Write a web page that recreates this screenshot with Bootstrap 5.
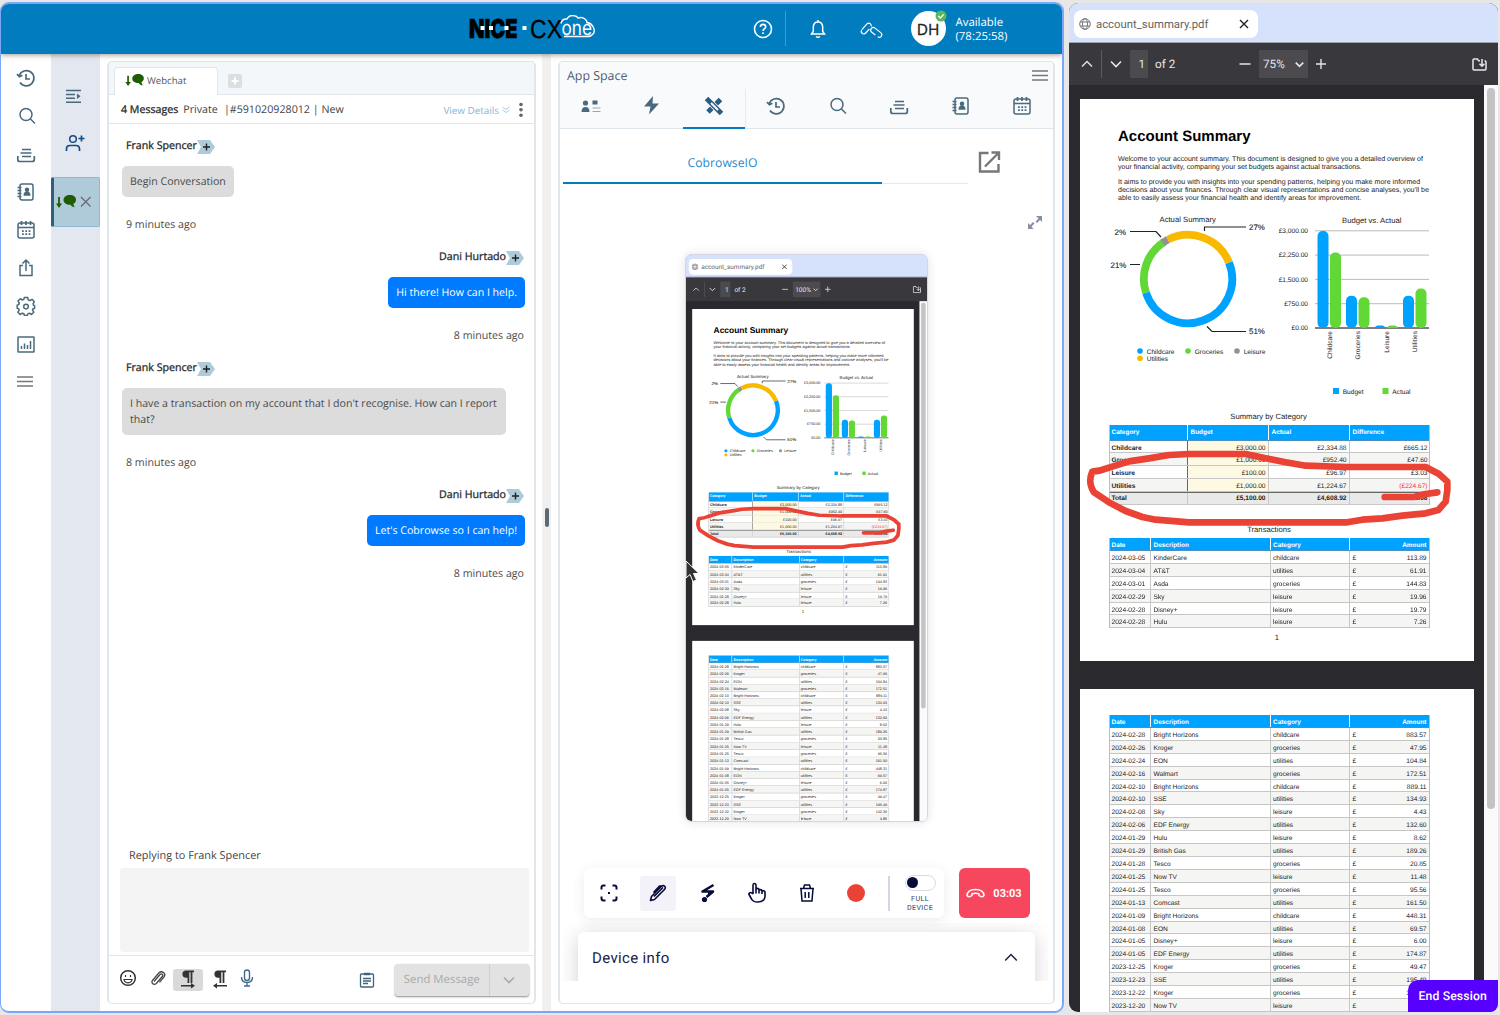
<!DOCTYPE html>
<html lang="en">
<head>
<meta charset="utf-8">
<title>Agent workspace</title>
<link href="https://cdn.jsdelivr.net/npm/bootstrap@5.3.0/dist/css/bootstrap.min.css" rel="stylesheet">
<style>
html,body{height:100%}
body{background:#e7e7e8;font-family:"Open Sans","Noto Sans",sans-serif;font-size:10.7px;line-height:16px;color:#444;overflow:hidden;text-rendering:geometricPrecision}
svg{display:block;flex:none}
.ico{width:20px;height:20px;color:#4a697d;fill:none;stroke:currentColor;stroke-width:1.5}
.desk{width:1500px;height:1015px;padding:2px 2px 3px 0}
.agent{width:1064px;height:1011px;border:2px solid #7ba6fa;border-left-width:1px;border-radius:9px;overflow:hidden;background:#fff}
.topbar{height:50px;background:#007cbf;display:grid;grid-template-columns:1fr auto 1fr;align-items:center;color:#fff;box-shadow:0 1px 5px rgba(80,50,30,.5);position:relative;z-index:2;flex:none}
.topright{padding-left:157px;padding-bottom:1px}
.hdiv{width:1px;height:35px;background:#3f9bd0}
.avatar{width:35px;height:35px;border-radius:50%;background:#fff;color:#222;font-size:15.5px;font-weight:500;-webkit-text-stroke:.35px #222;position:relative}
.avatar svg{position:absolute;right:-1px;top:-1px}
.rail{width:50px;padding:14px 0 0 0;gap:18px;flex:none}
.rail2{width:49px;background:#e3e7ef;flex:none}
.tile{width:49px;height:50px;background:#afcbda;border:1px solid #8fb9cf;border-left:3px solid #2b6081;border-radius:2px}
.panel{border:1px solid #dfe7ed;border-width:1px 2px 1.5px;border-radius:5px;background:#fff;overflow:hidden}
.chatpanel{width:429px;margin:7px 0 7px 7px;flex:none}
.tabstrip{height:33px;background:#f3f7fa;border-bottom:1px solid #dfe7ed;padding-left:5px;flex:none}
.chattab{width:104px;height:28px;margin-top:5px;background:#fff;border:1px solid #dfe7ed;border-bottom:0;border-radius:4px 4px 0 0;padding:0 0 2px 10px;font-size:9.6px;color:#555}
.addtab{width:14px;height:14px;background:#dcdfe0;border-radius:2px;margin:12px 0 0 10px}
.convhead{height:29px;border-bottom:1px solid #dfe7ed;padding:2px 10px 0 12px;white-space:pre;flex:none}
.thread{padding:13px 9px 0 13px;flex:1}
.who{height:16px;line-height:18px;font-weight:500;color:#222;padding:0 1px 0 4px;font-size:10.65px;-webkit-text-stroke:.3px #333}
.tag{width:18px;height:14px;margin-top:3px}
.bub{margin-top:13px;padding:8px 8px 7px;border-radius:5px;background:#dcdcdc;font-size:10.6px;color:#4a4a4a;white-space:nowrap}
.bub.long{width:384px}
.bub.out{background:#007bff;color:#fff}
.ago{height:16px;line-height:18px;margin:19px 1px 16px 4px;color:#4a4a4a;font-size:10.65px}
.compose{height:84px;margin:4px 5px 3px 11px;background:#f4f4f4;border-radius:3px}
.ctools{height:48px;border-top:1px solid #dfe7ed;padding:0 5px 0 9px;flex:none}
.rtl{width:30px;height:22px;background:#d9d9d9;border-radius:3px}
.send{width:134px;height:32px;background:#e2e2e2;color:#a9a9a9;border-radius:3px;box-shadow:0 1px 2px rgba(0,0,0,.45);font-size:11.4px}
.split{width:9px;background:#f0f0f0;margin:0 7px 0 6px;flex:none}
.grip{width:4px;height:19px;border-radius:2px;background:#5b6b76}
.appspace{width:497px;margin:7px 0 7px 0;flex:none}
.apphead{height:67px;background:#f9fafc;border-bottom:1px solid #dfe7ed;flex:none}
.apptabs>span{width:62px;height:40px;padding-bottom:6px;display:flex;align-items:center;justify-content:center}
.apptabs>span.on{border-bottom:2px solid #007cbf;padding-bottom:4px;box-shadow:1px 0 0 #e6ebf0}
.cotab{width:319px;height:54px;border-bottom:2.5px solid #007cbf;color:#2b8ac9;font-size:12.2px}
.shot{width:243px;height:568px;margin:0 auto;border-radius:6px;border:1px solid #d3d6e6;overflow:hidden;box-shadow:0 0 10px rgba(60,60,100,.14)}
.shot .scaler{transform:scale(.5625);transform-origin:0 0;width:430px;height:1010px}
.cotools{width:360px;height:50px;background:#fff;border-radius:7px;box-shadow:0 3px 14px rgba(40,40,70,.09);color:#060b3a}
.cotools .ci{width:49.5px;display:flex;justify-content:center}
.act{width:36px;height:35px;background:#f4f2f9;border-radius:3px}
.endcall{width:71px;height:50px;background:#f7475f;border-radius:6px;color:#fff;font:bold 11px Roboto,sans-serif;gap:8px}
.full{font:400 7.2px/9px Roboto,sans-serif;color:#3b3f63;text-align:center;letter-spacing:.35px}
.tog{width:31px;height:16px;border:1px solid #d9dae3;border-radius:8px;padding:1.5px}
.tog i{display:block;width:11px;height:11px;border-radius:50%;background:#060b3a}
.infoclip{height:58px;overflow:hidden;padding:9px 14px 0 15px;margin:5px 4px 0 3px}
.info{height:70px;background:#fff;border-radius:6px;box-shadow:0 4px 20px rgba(30,30,60,.2);color:#1d2145;font:15px Roboto,"Noto Sans",sans-serif;letter-spacing:.35px;padding:0 17px 19px 14px}
/* pdf browser window */
.pdfwin{width:429px;height:1009px;border-radius:9px;overflow:hidden;background:#2a2a2e;font-family:Roboto,sans-serif;text-align:left}
.pdfwin .tabs{height:39px;background:#d6e1fb;padding:7px 0 0 5px;flex:none}
.pdftab{width:184px;height:28px;background:#fff;border-radius:8px;padding:0 9px 0 5px;color:#666;font-size:11.35px}
.ptools{height:43px;background:#38383d;color:#e6e6e8;font-size:11.7px;border-top:1px solid #9fa3ad;flex:none}
.ptools .fld{height:28px;background:#4a4a4f}
.stage{padding:14px 0 0 11px}
.track{width:14px;background:#fafafa;padding:3px 0 0 3px}
.thumbbar{width:8px;height:721px;border-radius:4px;background:#c4c4c4}
.sheet{width:394px;height:562px;background:#fff;color:#111;font-family:"Liberation Sans",Arial,sans-serif;position:relative;margin-bottom:28px;flex:none}
.sheet h1{font-size:15px;line-height:18px;font-weight:700;margin:0;padding:29px 0 0 38px;color:#000}
.sheet p{font-size:7.08px;line-height:8px;margin:0 0 7px 38px;white-space:nowrap;color:#222}
.cap7{font-size:7.7px;line-height:11.5px;height:10px;text-align:center;color:#222}
.gt{border:1px solid #bdbdbd;border-width:0 .8px;width:321.5px;margin-left:28.5px;font-size:6.6px;line-height:15px;color:#222}
.gr{height:12.92px;display:flex;border-bottom:1px solid #c6c6c6}
.gr:nth-child(odd){background:#f5f5f3}
.gr>*{border-left:1px solid #c8c8c8;padding:0 2.5px 0 2.5px;overflow:hidden;white-space:nowrap;flex:none}
.gr>*:first-child{border-left:0;padding-left:2px}
.gr.h{background:#00a2ff;color:#fff;font-weight:700;font-size:6.45px;border-bottom-color:#4a90c0}
.gr.h>*{border-left-color:#fff}
.tx>.gr>:nth-child(1){width:40.5px}.tx>.gr>:nth-child(2){width:119.5px}.tx>.gr>:nth-child(3){width:79.5px}
.tx>.gr>:nth-child(4){width:80px;display:flex;justify-content:space-between}
.sm>.gr>*{width:81px;text-align:right}.sm>.gr>:first-child{width:77.5px;text-align:left;font-weight:700}
.sm>.gr:not(.h):not(.t)>:nth-child(2){background:#fef9e2;border-left-color:#666}
.sm>.gr.h{height:15.5px;line-height:16.5px}.sm>.gr.h>*{text-align:left}
.sm>.gr.t{background:#e9e9e9;font-weight:700;border-top:1px solid #666;line-height:12.5px}
.neg{color:#ff2d35}
.ink{position:absolute;left:0;top:0}
.endses{position:absolute;right:0;bottom:0;width:90.5px;height:32px;background:#5800ff;color:#fff;border-radius:10px 0 8px 0;font:500 12.2px/32px Roboto,sans-serif;text-align:center;letter-spacing:.15px}
.cursor{position:absolute;left:0;top:307px}
</style>
</head>
<body>
<svg width="0" height="0" class="position-absolute" aria-hidden="true">
<symbol id="i-hist" viewBox="0 0 20 20"><path d="M3.2 7.500A7.600 7.600 0 1 1 4 14.500M1 6.200l2.400 2.600 3-1.600M10 6v5h4" stroke-width="1.700"/></symbol>
<symbol id="i-search" viewBox="0 0 20 20"><circle cx="10" cy="8.500" r="6"/><path d="M14.500 13l4.500 4.500" /></symbol>
<symbol id="i-inbox" viewBox="0 0 20 20"><path d="M6 5.500h9M4.500 9h11M6 12.500h9M1.800 12v3.500q0 2 2 2h12.500q2 0 2-2V12" stroke-width="1.700"/></symbol>
<symbol id="i-book" viewBox="0 0 20 20"><rect x="4" y="2" width="13" height="16" rx="2"/><path d="M1.500 5.500h4M1.500 8.500h4M1.500 11.500h4M1.500 14.500h4"/><circle cx="11" cy="7.800" r="1.500" fill="currentColor"/><path d="M8.300 13q0-2.800 2.700-2.800t2.700 2.800z" fill="currentColor"/></symbol>
<symbol id="i-cal" viewBox="0 0 20 20"><rect x="2" y="3" width="16" height="15" rx="2"/><path d="M2 7.500h16M5.500 1v4M10 1v4M14.500 1v4" stroke-width="1.700"/><path d="M6 11.200h9M6 14.200h9" stroke-dasharray="1.800 1.500" stroke-width="1.800"/></symbol>
<symbol id="i-share" viewBox="0 0 20 20"><path d="M7 7.500H4v10h12v-10h-3M10 13V2.500M6.500 5.500L10 2l3.500 3.500"/></symbol>
<symbol id="i-gear" viewBox="0 0 20 20"><path d="M8.300 1.500h3.400l.5 2.300 1.700.8 2.100-1.300 2.300 2.400-1.300 2.100.6 1.500 1 .3v2.800l-1.600.4-.5 1.300 1.300 2.100-2.300 2.300-2.100-1.300-1.600.7-.5 1.600H8.400l-.5-1.700-1.600-.6-2.200 1.300-2.200-2.300 1.300-2-.6-1.600-1.400-.4V9l1.500-.4.6-1.500L2 5l2.300-2.300 2 1.300 1.500-.6z" stroke-linejoin="round"/><circle cx="10" cy="10.600" r="2.300"/></symbol>
<symbol id="i-chart" viewBox="0 0 20 20"><rect x="2" y="3" width="16" height="15" rx=".5"/><path d="M5.500 15v-3M8.500 15V9.500M11.500 15v-4M14.500 15V7"/></symbol>
<symbol id="i-menu" viewBox="0 0 20 20"><path d="M1 5h16M1 9.500h16M1 14h16" stroke="#777" stroke-width="1.500"/></symbol>
<symbol id="i-chat" viewBox="0 0 22 14"><path d="M3 2v8" stroke="#1f5c00" stroke-width="1.800"/><path d="M0 8.500h6L3 13z" fill="#1f5c00" stroke="none"/><path d="M14 0c3.500 0 6 2 6 4.700 0 2-1 3.300-2.500 4 0 1.500.6 2.600 1.400 3.500-2 0-3.600-1-4.400-2.500C10.500 9.800 7.500 8 7.500 4.900 7.500 2 10.500 0 14 0z" fill="#1f5c00" stroke="none"/></symbol>
<symbol id="i-plus" viewBox="0 0 18 14"><path d="M0 0h13l5 7-5 7H0l4-7z" fill="#aecbda" stroke="none"/><path d="M6 7h7M9.500 3.500v7" stroke="#222" stroke-width="1.400"/></symbol>
<symbol id="i-pil" viewBox="0 0 16 20"><path d="M14 1.500H6a3.600 3.600 0 0 0 0 7.200H7.500V14h1.800V3.300h1.300V14h1.800V3.300H14z" fill="#333" stroke="none"/></symbol>
<symbol id="i-chev" viewBox="0 0 12 8"><path d="M1 1.500l5 5 5-5" fill="none" stroke="currentColor" stroke-width="1.600"/></symbol>
</svg>

<main class="desk d-flex justify-content-between">
<div class="agent d-flex flex-column">
 <header class="topbar">
  <span></span>
  <svg width="128" height="28" viewBox="468 14.500 128 28">
   <text x="469" y="37" textLength="48.500" lengthAdjust="spacingAndGlyphs" font-family="Inter,sans-serif" font-weight="900" font-size="26" fill="#000" stroke="#000" stroke-width=".6">NICE</text>
   <g fill="#fff"><rect x="480.500" y="25.500" width="4" height="4"/><rect x="489" y="25.500" width="4" height="4"/><rect x="504.500" y="25.500" width="4" height="4"/><rect x="522.500" y="25.500" width="4" height="4"/></g>
   <text x="530" y="37" textLength="32" lengthAdjust="spacingAndGlyphs" font-family="Liberation Sans" font-size="26" fill="#000" stroke="#000" stroke-width=".3">CX</text>
   <text x="561.500" y="34.500" textLength="30.500" lengthAdjust="spacingAndGlyphs" font-family="Inter,sans-serif" font-size="20.500" font-weight="400" fill="#fff">one</text>
   <path d="M561 23q1-5 6-4.500 2-4 7-3.200 3 0 4 2.200 4-1.500 7 1 2 1.500 2 3.500 4 .5 6 4 2.500 5 0 7.500-2 2.500-5 2.500h-24" fill="none" stroke="#fff" stroke-width="1.400"/>
  </svg>
  <div class="topright d-flex align-items-center">
   <svg width="20" height="20" fill="none" stroke="#fff" stroke-width="1.600"><circle cx="10" cy="10" r="8.500"/><path d="M7.300 8q.2-2.600 2.700-2.600T12.700 7.800q0 1.200-1.400 2.100-1.300.9-1.300 2.100M10 13.300v1.700"/></svg>
   <span class="hdiv" style="margin:0 24px 0 12px"></span>
   <svg width="16" height="20" fill="none" stroke="#fff" stroke-width="1.500"><path d="M1.500 15h13l-1.800-2.500V8Q12.500 3 8 3T3.300 8v4.500zM8 1v2M6 17.500q2 1.500 4 0"/></svg>
   <svg width="24" height="20" style="margin-left:33px" fill="none" stroke="#fff" stroke-width="1.200"><rect x="1" y="7" width="12.500" height="5.200" rx="2.600" transform="rotate(-48 7.200 9.600)" stroke-dasharray="14 3 13 2"/><rect x="11" y="10.800" width="12.500" height="5.200" rx="2.600" transform="rotate(38 17.200 13.400)" stroke-dasharray="15 3"/></svg>
   <span class="avatar d-flex align-items-center justify-content-center" style="margin-left:28px">DH
    <svg width="12" height="12"><circle cx="6" cy="6" r="5.500" fill="#5cb85c"/><path d="M3.400 6l2 2 3.300-3.600" fill="none" stroke="#fff" stroke-width="1.300"/></svg></span>
   <span style="margin-left:10px;font-size:11.4px;line-height:14px;padding-top:2px">Available<br>(78:25:58)</span>
  </div>
 </header>
 <div class="d-flex flex-grow-1">
  <nav class="rail d-flex flex-column align-items-center">
   <svg class="ico"><use href="#i-hist"/></svg><svg class="ico"><use href="#i-search"/></svg><svg class="ico"><use href="#i-inbox"/></svg><svg class="ico"><use href="#i-book"/></svg><svg class="ico"><use href="#i-cal"/></svg><svg class="ico"><use href="#i-share"/></svg><svg class="ico"><use href="#i-gear"/></svg><svg class="ico"><use href="#i-chart"/></svg><svg class="ico"><use href="#i-menu"/></svg>
  </nav>
  <nav class="rail2 d-flex flex-column">
   <svg class="ico" style="margin:32px 0 0 13px"><path d="M2 4.500h15M2 8.500h9M2 12.200h9M2 16.200h15"/><path d="M13 7.500l3.500 2.800-3.500 2.800z" fill="currentColor" stroke="none"/></svg>
   <svg class="ico" style="margin:27px 0 24px 14px;color:#124b86"><circle cx="8" cy="6" r="3.300"/><path d="M1.500 18v-2q0-3.500 3.500-3.500h6q3.500 0 3.500 3.500v2M13.500 5.500h6M16.500 2.500v6" stroke-width="1.700"/></svg>
   <div class="tile d-flex align-items-center"><svg width="22" height="14" style="margin-left:2px"><use href="#i-chat"/></svg><svg width="12" height="12" style="margin-left:2px"><path d="M1 1l9.500 9.500M10.500 1L1 10.500" stroke="#667" stroke-width="1.200"/></svg></div>
  </nav>
  <section class="panel chatpanel d-flex flex-column">
   <div class="tabstrip d-flex">
    <div class="chattab d-flex align-items-center"><svg width="21" height="13" class="me-1" style="margin-right:1px!important"><use href="#i-chat"/></svg>Webchat</div>
    <span class="addtab"><svg width="14" height="14"><path d="M3.500 7h7M7 3.500v7" stroke="#fff" stroke-width="2"/></svg></span>
   </div>
   <div class="convhead d-flex align-items-center"><span class="who p-0" style="line-height:16px">4 Messages</span><span style="margin-left:5px">Private</span><span style="margin-left:6px">|#591020928012 | New</span>
    <span class="ms-auto" style="color:#83b8dd;font-size:9.9px">View Details</span><svg width="8" height="8" style="margin-left:3px" fill="none" stroke="#a9cbe4"><path d="M.5 1l3.500 2.500L7.500 1M.5 4l3.500 2.500L7.500 4"/></svg>
    <svg width="6" height="16" style="margin-left:8px" fill="#666"><circle cx="3" cy="2.500" r="1.800"/><circle cx="3" cy="7.800" r="1.800"/><circle cx="3" cy="13.200" r="1.800"/></svg></div>
   <div class="thread d-flex flex-column align-items-start">
    <div class="who d-flex">Frank Spencer<svg class="tag"><use href="#i-plus"/></svg></div>
    <div class="bub">Begin Conversation</div><div class="ago">9 minutes ago</div>
    <div class="who d-flex align-self-end">Dani Hurtado<svg class="tag"><use href="#i-plus"/></svg></div>
    <div class="bub out align-self-end">Hi there! How can I help.</div><div class="ago align-self-end">8 minutes ago</div>
    <div class="who d-flex">Frank Spencer<svg class="tag"><use href="#i-plus"/></svg></div>
    <div class="bub long">I have a transaction on my account that I don't recognise. How can I report<br>that?</div><div class="ago">8 minutes ago</div>
    <div class="who d-flex align-self-end">Dani Hurtado<svg class="tag"><use href="#i-plus"/></svg></div>
    <div class="bub out align-self-end">Let's Cobrowse so I can help!</div><div class="ago align-self-end">8 minutes ago</div>
   </div>
   <div style="padding-left:20px;font-size:10.9px">Replying to Frank Spencer</div>
   <div class="compose flex-shrink-0"></div>
   <div class="ctools d-flex align-items-center">
    <svg class="ico" style="color:#333;margin-top:-4px" stroke-width="1.400"><circle cx="10" cy="10" r="7.300"/><path d="M7.500 7v2M12.500 7v2M6 11.500h8q-.5 3.300-4 3.300T6 11.500z" stroke-width="1.200"/></svg>
    <svg width="16" height="18" style="margin:-4px 0 0 12px" fill="none" stroke="#444" stroke-width="1.300"><path d="M4 12.500l6-7q1.300-1.200 2.300-.2t0 2.200l-6 7q-2 1.500-3.500.2t-.3-3.400l6.500-7.500q2.200-2 4.500-.3t.5 4.300l-4.500 5.500"/></svg>
    <span class="rtl d-flex justify-content-center" style="margin-left:7px"><svg width="16" height="20"><use href="#i-pil"/><path d="M1 16.800h11" stroke="#333" stroke-width="1.500"/><path d="M11 14l4 2.800-4 2.800z" fill="#333"/></svg></span>
    <svg width="16" height="20" style="margin-left:9px;margin-top:-1px"><use href="#i-pil"/><path d="M4 16.800h11" stroke="#333" stroke-width="1.500"/><path d="M5 14l-4 2.800 4 2.800z" fill="#333"/></svg>
    <svg width="14" height="20" style="margin:-4px 0 0 12px" fill="none" stroke="#3f6e8c" stroke-width="1.400"><rect x="4.500" y="2" width="5" height="10.500" rx="2.500"/><path d="M1.500 9q0 5.500 5.500 5.500T12.500 9M7 14.500v3M4 18h6"/></svg>
    <svg width="16" height="16" class="ms-auto" fill="none" stroke="#3f6478" stroke-width="1.300"><rect x="1.500" y="2" width="13" height="13" rx="1"/><path d="M5 2h6" stroke-width="2.500"/><path d="M4 6.500h8M4 9h8M4 11.500h5"/></svg>
    <div class="send d-flex" style="margin-left:20px"><span class="d-flex align-items-center justify-content-center" style="width:94.500px;border-right:1px solid #cfcfcf">Send Message</span><span class="flex-grow-1 d-flex align-items-center justify-content-center"><svg width="12" height="8"><use href="#i-chev"/></svg></span></div>
   </div>
  </section>
  <div class="split d-flex align-items-center justify-content-center"><span class="grip" style="margin-bottom:31px"></span></div>
  <section class="panel appspace d-flex flex-column">
   <div class="apphead">
    <div class="d-flex justify-content-between align-items-center" style="height:27px;padding:0 2px 0 7px;font-size:12.4px;color:#50616d">App Space<svg width="20" height="20"><use href="#i-menu"/></svg></div>
    <div class="apptabs d-flex">
     <span><svg class="ico"><circle cx="4.500" cy="7" r="2.600" fill="currentColor" stroke="none"/><path d="M.5 16q0-5 4-5t4 5z" fill="currentColor" stroke="none"/><path d="M11.500 4.500h5v4h-5z" fill="currentColor" stroke="none"/><path d="M11.500 12h8M11.500 15.500h8" stroke="#98a8b2" stroke-width="1"/></svg></span>
     <span><svg class="ico"><path d="M11 0L2 10.500H8.500L7 18.500 17 7.500h-6.500z" fill="currentColor" stroke="none"/></svg></span>
     <span class="on"><svg class="ico" style="color:#2a5d80"><path d="M4 16L16.500 3.500" stroke-width="5"/><path d="M3 3l14 14" stroke="#f9fafc" stroke-width="6.500"/><path d="M2.500 2.500l15 15" stroke-width="5"/><path d="M7 7l7 7" stroke="#f9fafc" stroke-width="2"/></svg></span>
     <span><svg class="ico"><use href="#i-hist"/></svg></span><span><svg class="ico"><use href="#i-search"/></svg></span><span><svg class="ico"><use href="#i-inbox"/></svg></span><span><svg class="ico"><use href="#i-book"/></svg></span><span><svg class="ico"><use href="#i-cal"/></svg></span>
    </div>
   </div>
   <div class="d-flex" style="padding:1px 0 0 3px">
    <div class="cotab d-flex align-items-center justify-content-center" style="padding-top:13px">CobrowseIO</div>
    <div style="width:86px;border-bottom:1px solid #e3e9ee"></div>
    <svg width="24" height="24" style="margin:20px 0 0 10px" fill="none" stroke="#777" stroke-width="2.400"><path d="M10.500 3H2v18.500H20.500V14M13.500 2.500h7.500V10M20.500 3L7 16.500"/></svg>
   </div>
   <svg width="16" height="16" class="ms-auto" style="margin:30px 10px 0 0" fill="#8a8ea6"><path d="M9 2h6v6l-2-2-3 3-1.500-1.500 3-3zM1 9l2 2 3-3 1.500 1.500-3 3 2 2.500H1z"/></svg>
   <div style="padding:24px 0 0 0">
    <div class="position-relative mx-auto" style="width:243px">
     <div class="shot"><div class="scaler" data-pdf="100%"></div></div>
     <svg class="cursor" width="16" height="22"><path d="M1 0v17l4-3.500 3 7 3.500-1.500-3-6.500H14z" fill="#333" stroke="#fff" stroke-width="1"/></svg>
    </div>
   </div>
   <div class="d-flex" style="padding:46px 0 0 24px">
    <div class="cotools d-flex align-items-center">
     <span class="ci"><svg width="18" height="18" fill="none" stroke="currentColor" stroke-width="2"><path d="M1.500 5.500v-2q0-2 2-2h2M12.500 1.500h2q2 0 2 2v2M16.500 12.500v2q0 2-2 2h-2M5.500 16.500h-2q-2 0-2-2v-2"/><path d="M8 9h2"/></svg></span>
     <span class="ci"><span class="act d-flex align-items-center justify-content-center"><svg width="18" height="18" fill="none" stroke="currentColor" stroke-width="1.600" stroke-linejoin="round"><path d="M1.500 16.500l1-4L12.500 2.200q2-1.200 3.200 0t0 3L5.500 15.500zM5 12.500L14 3.500M4.500 8.500l6-6.500h2"/></svg></span></span>
     <span class="ci"><svg width="18" height="20"><path d="M14.500 2L3.500 8.500H14L7.500 14" fill="none" stroke="currentColor" stroke-width="2.600" stroke-linejoin="round"/><path d="M9 9h6l-6 5z" fill="currentColor"/><circle cx="5.500" cy="16.500" r="2.600" fill="currentColor"/></svg></span>
     <span class="ci"><svg width="20" height="22" fill="none" stroke="currentColor" stroke-width="1.600" stroke-linejoin="round"><path d="M6 12V3q.2-1.500 1.500-1.500T9 3v5.500V7q1.200-1.200 3 .2V8q1.500-1 3 .3V9q2-.8 3 .8v4.700q-.5 5.500-7.500 5.500Q6 20 4.500 17L1.800 12q.5-2.200 3-1L6 12M9 8v3.500M12 8v3.500M15 9v3"/></svg></span>
     <span class="ci"><svg width="18" height="20" fill="none" stroke="currentColor" stroke-width="1.500"><path d="M2 5.500h14M5.500 5.500l1-3.500h5l1 3.500M3 5.500l1 12.500h10l1-12.500M7.200 9v6M10.800 9v6"/></svg></span>
     <span class="ci"><svg width="18" height="18"><circle cx="9" cy="9" r="9" fill="#ea4335"/></svg></span>
     <span style="width:1.500px;height:35px;background:#d5d6df;margin:0 15px 0 7px"></span>
     <div class="d-flex flex-column align-items-center"><span class="tog" style="margin-bottom:3px"><i></i></span><span class="full">FULL<br>DEVICE</span></div>
    </div>
    <div class="endcall d-flex align-items-center justify-content-center" style="margin-left:14.500px"><svg width="19" height="11" fill="none" stroke="#fff" stroke-width="1.500" stroke-linejoin="round"><path d="M1 7.500Q1.500 1.500 9.500 1.500T18 7.500q-2 2.500-5 0V5.800q-3.500-1.300-7 0v1.700q-3 2.500-5 0z"/></svg>03:03</div>
   </div>
   <div class="infoclip"><div class="info d-flex align-items-center justify-content-between">Device info<svg width="14" height="9" fill="none" stroke="#1d2145" stroke-width="1.500"><path d="M1.200 7.500L7 1.500l5.800 6"/></svg></div></div>
  </section>
 </div>
</div>

<div class="position-relative" style="height:1009px;margin-top:1px">
 <div data-pdf="75%"></div>
 <div class="endses">End Session</div>
</div>
</main>

<template id="pdf">
<div class="pdfwin d-flex flex-column">
 <div class="tabs"><div class="pdftab d-flex align-items-center">
  <svg width="12" height="12" fill="none" stroke="#777"><circle cx="6" cy="6" r="5.300"/><ellipse cx="6" cy="6" rx="2.500" ry="5.300"/><path d="M1 4h10M1 8h10"/></svg>
  <span style="margin-left:5px">account_summary.pdf</span>
  <svg class="ms-auto" width="10" height="10"><path d="M1 1l8 8M9 1L1 9" stroke="#222" stroke-width="1.400"/></svg></div></div>
 <div class="ptools d-flex align-items-center">
  <svg width="12" height="8" style="margin-left:12px"><path d="M1 6.500l5-5 5 5" fill="none" stroke="currentColor" stroke-width="1.400"/></svg>
  <span style="width:1px;height:28px;background:#5b5b60;margin:0 8px"></span>
  <svg width="12" height="8"><use href="#i-chev"/></svg>
  <span class="fld d-flex align-items-center justify-content-end" style="width:18px;margin:0 7px 0 8px;padding-right:3px">1</span>of 2
  <svg width="12" height="4" class="ms-auto"><path d="M.500 2h11" stroke="currentColor" stroke-width="1.400"/></svg>
  <span class="fld d-flex align-items-center" style="width:49px;margin:0 7px 0 8px;padding-left:4px"><span class="zm"></span><svg class="ms-auto me-1" width="9" height="7" viewBox="0 0 12 8"><path d="M1 1.500l5 5 5-5" fill="none" stroke="currentColor" stroke-width="2.200"/></svg></span>
  <svg width="12" height="12"><path d="M1 6h10M6 1v10" stroke="currentColor" stroke-width="1.400"/></svg>
  <svg width="15" height="13" style="margin:0 11px 0 145px" fill="none" stroke="currentColor" stroke-width="1.500"><path d="M8 2.800H6.500L5.500 1H2Q1 1 1 2v9q0 1 1 1h11q1 0 1-1V4q0-1.200-1.500-1.200M10 1v7M7.500 5.800L10 8.300l2.500-2.500"/></svg>
 </div>
 <div class="d-flex flex-grow-1" style="min-height:0">
  <div class="stage flex-grow-1">
   <div class="sheet">
    <h1>Account Summary</h1>
    <p style="margin-top:8.500px">Welcome to your account summary. This document is designed to give you a detailed overview of<br>your financial activity, comparing your set budgets against actual transactions.</p>
    <p style="margin-bottom:8.500px">It aims to provide you with insights into your spending patterns, helping you make more informed<br>decisions about your finances. Through clear visual representations and concise analyses, you'll be<br>able to easily assess your financial health and identify areas for improvement.</p>
    <svg width="394" height="201" viewBox="0 111 394 201" class="chart" font-size="6.600" fill="#222"></svg>
    <div class="cap7" style="width:377px">Summary by Category</div>
    <div class="gt sm" style="margin-top:4px"></div>
    <div class="cap7" style="width:378px;margin:19px 0 4px">Transactions</div>
    <div class="gt tx" data-from="0" data-to="6"></div>
    <div class="cap7" style="width:394px;margin-top:4px">1</div>
    <svg class="ink" width="394" height="562"><g transform="translate(-1 306) scale(.33333)" fill="none" stroke="#ea4335" stroke-width="20" stroke-linecap="round" stroke-linejoin="round"><path d="M40 200Q65 198 90 188L150 169 210 160 270 150 330 147H500L560 160 620 172 680 182 800 186H1040L1080 207 1105 230 1105 255 1100 290 1078 315 1040 325 970 332 910 340 850 344 805 352H330L230 344 190 336 140 318 90 292 45 262Q30 240 35 215z"/><path d="M917 276H1005L1040 267 1075 262"/></g></svg>
   </div>
   <div class="sheet" style="padding-top:26px"><div class="gt tx" data-from="6" data-to="30"></div></div>
  </div>
  <div class="track"><div class="thumbbar"></div></div>
 </div>
</div>
</template>

<script src="https://cdn.jsdelivr.net/npm/bootstrap@5.3.0/dist/js/bootstrap.bundle.min.js"></script>
<script>
const summary=[["Childcare","£3,000.00","£2,334.88","£665.12"],["Groceries","£1,000.00","£952.40","£47.60"],["Leisure","£100.00","£96.97","£3.03"],["Utilities","£1,000.00","£1,224.67","(£224.67)"],["Total","£5,100.00","£4,608.92","£491.08"]];
const tx=`2024-03-05|KinderCare|childcare|113.89
2024-03-04|AT&amp;T|utilities|61.91
2024-03-01|Asda|groceries|144.83
2024-02-29|Sky|leisure|19.96
2024-02-28|Disney+|leisure|19.79
2024-02-28|Hulu|leisure|7.26
2024-02-28|Bright Horizons|childcare|883.57
2024-02-26|Kroger|groceries|47.95
2024-02-24|EON|utilities|104.84
2024-02-16|Walmart|groceries|172.51
2024-02-10|Bright Horizons|childcare|889.11
2024-02-10|SSE|utilities|134.93
2024-02-08|Sky|leisure|4.43
2024-02-06|EDF Energy|utilities|132.60
2024-01-29|Hulu|leisure|8.62
2024-01-29|British Gas|utilities|189.26
2024-01-28|Tesco|groceries|20.85
2024-01-25|Now TV|leisure|11.48
2024-01-25|Tesco|groceries|95.56
2024-01-13|Comcast|utilities|161.50
2024-01-09|Bright Horizons|childcare|448.31
2024-01-08|EON|utilities|69.57
2024-01-05|Disney+|leisure|6.00
2024-01-05|EDF Energy|utilities|174.87
2023-12-25|Kroger|groceries|49.47
2023-12-23|SSE|utilities|195.49
2023-12-22|Kroger|groceries|142.36
2023-12-20|Now TV|leisure|4.86`.split("\n").map(r=>r.split("|"));
const B="#00a2ff",G="#61d836",Y="#f8ba00",K="#929292";
function chart(){
 let s="";
 const cx=108,cy=180,r=44.2,pt=a=>[cx+r*Math.sin(a*Math.PI/180),cy-r*Math.cos(a*Math.PI/180)];
 [[B,68,252],[G,252,327],[K,325,333],[Y,333,428]].forEach(([c,a,b])=>{const p=pt(a),q=pt(b);s+=`<path d="M${p}A${r} ${r} 0 ${b-a>180?1:0} 1 ${q}" fill="none" stroke="${c}" stroke-width="7.800"/>`});
 s+=`<g fill="none" stroke="#222" stroke-width="1.200"><path d="M50 132.500H76L81 138M50 165.500h10M124.500 132v-4H166M127 227.500l5 5H166"/></g>`;
 const t=(x,y,v,o="")=>{s+=`<text x="${x}" y="${y}" ${o}>${v}</text>`};
 t(79.500,122.800,"Actual Summary",'font-size="7.700"');t(262,123.600,"Budget vs. Actual",'font-size="7.700"');
 [["27%",169,130.800],["51%",169,234.800],["2%",34.500,135.600],["21%",30.500,168.800]].forEach(a=>t(a[1],a[2],a[0],'font-size="7.900" stroke="#222" stroke-width=".1"'));
 ["£3,000.00","£2,250.00","£1,500.00","£750.00","£0.00"].forEach((v,i)=>{const y=131.800+i*24.300;t(228,y+2.200,v,'text-anchor="end"');s+=`<path d="M235 ${y}h114" stroke="${i==4?"#555":"#bbb"}" stroke-width="${i==4?1.500:1}"/>`});
 const v=[[3000,2334],[1000,952],[100,97],[1000,1224]];
 v.forEach((p,i)=>{p.forEach((n,j)=>{const h=Math.max(n*97/3000,2.500),x=237.500+i*28.500+j*12.500;
  s+=h<5?`<path d="M${x} 229q1-2.500 3-2.500h5q2 0 3 2.500z" fill="${j?G:B}"/>`:`<rect x="${x}" y="${229-h}" width="11" height="${h}" rx="5" fill="${j?G:B}"/>`});
  t(0,0,["Childcare","Groceries","Leisure","Utilities"][i],`text-anchor="end" transform="translate(${251.600+i*28.500} 232) rotate(-90)"`)});
 [["Childcare",60,252.500,B],["Groceries",108,252.500,G],["Leisure",157,252.500,K],["Utilities",60,259.800,Y]].forEach(a=>{s+=`<circle cx="${a[1]}" cy="${a[2]-.5}" r="2.800" fill="${a[3]}"/>`;t(a[1]+6.700,a[2]+2,a[0])});
 [["Budget",253,B],["Actual",302.500,G]].forEach(a=>{s+=`<rect x="${a[1]}" y="289" width="6" height="6" fill="${a[2]}"/>`;t(a[1]+9.700,294.700,a[0])});
 return s;
}
document.querySelectorAll("[data-pdf]").forEach(host=>{
 host.append(document.getElementById("pdf").content.cloneNode(true));
 host.querySelector(".zm").textContent=host.dataset.pdf;
 host.querySelector(".chart").innerHTML=chart();
 host.querySelector(".sm").innerHTML='<div class="gr h"><b>Category</b><b>Budget</b><b>Actual</b><b>Difference</b></div>'+summary.map((r,i)=>`<div class="gr ${i==4?"t":""}">`+r.map(c=>`<span${c[0]=="("?' class="neg"':""}>${c}</span>`).join("")+"</div>").join("");
 host.querySelectorAll(".tx").forEach(t=>{
  t.innerHTML='<div class="gr h"><b>Date</b><b>Description</b><b>Category</b><b><i></i>Amount</b></div>'+tx.slice(+t.dataset.from,+t.dataset.to).map(r=>`<div class="gr"><span>${r[0]}</span><span>${r[1]}</span><span>${r[2]}</span><span><i class="fst-normal">£</i>${r[3]}</span></div>`).join("");
 });
});
</script>
</body>
</html>
